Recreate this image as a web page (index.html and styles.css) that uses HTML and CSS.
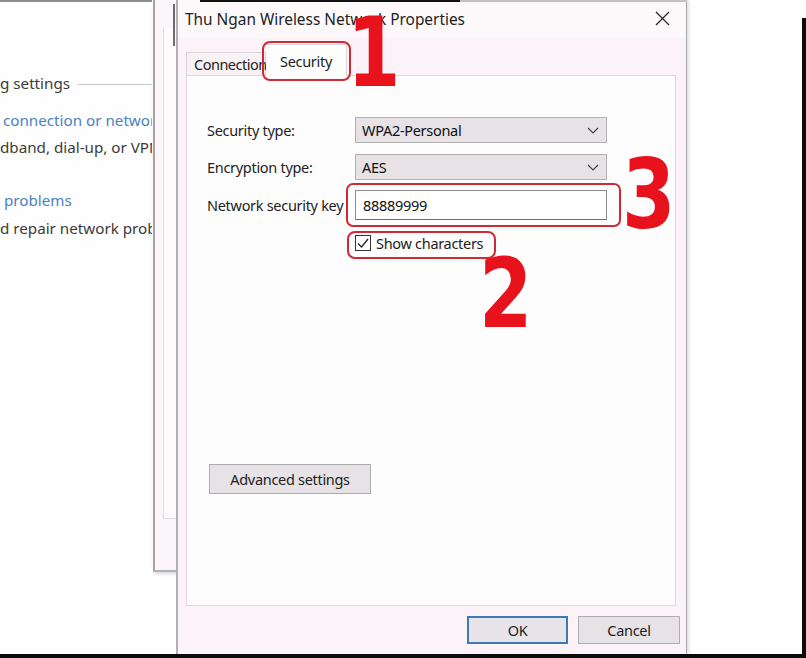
FILE: index.html
```html
<!DOCTYPE html>
<html>
<head>
<meta charset="utf-8">
<link rel="stylesheet" href="styles.css">
</head>
<body>
<div class="desk">
  <div class="bgwin">
    <div class="bg-head"><span>g settings</span><span class="rule"></span></div>
    <div class="bg-link first">connection or network</div>
    <div class="bg-text">dband, dial-up, or VPN</div>
    <div class="bg-link second">problems</div>
    <div class="bg-text">d repair network problems</div>
  </div>

  <div class="midwin"><div class="midwin-inner"></div><div class="midwin-mark"></div></div>

  <div class="dialog">
    <div class="titlebar">
      <span class="title">Thu Ngan Wireless Network Properties</span>
      <svg class="close" width="15" height="15" viewBox="0 0 15 15"><path d="M1 1 L14 14 M14 1 L1 14" stroke="#2a2a2a" stroke-width="1.3" fill="none"/></svg>
    </div>
    <div class="tabs">
      <div class="tab">Connection</div>
      <div class="tab active">Security</div>
    </div>
    <div class="panel">
      <div class="form">
        <label class="lbl">Security type:</label>
        <div class="select"><span>WPA2-Personal</span><svg width="12" height="7" viewBox="0 0 12 7"><path d="M1 1 L6 6 L11 1" stroke="#444" stroke-width="1.2" fill="none"/></svg></div>
        <label class="lbl">Encryption type:</label>
        <div class="select"><span>AES</span><svg width="12" height="7" viewBox="0 0 12 7"><path d="M1 1 L6 6 L11 1" stroke="#444" stroke-width="1.2" fill="none"/></svg></div>
        <label class="lbl">Network security key</label>
        <div class="input">88889999</div>
        <span></span>
        <div class="check"><span class="box"><svg width="14" height="14" viewBox="0 0 14 14"><path d="M2 7.5 L5.5 11 L12 3" stroke="#222" stroke-width="1.3" fill="none"/></svg></span><span>Show characters</span></div>
      </div>
      <button class="btn adv">Advanced settings</button>
    </div>
    <div class="actions">
      <button class="btn ok">OK</button>
      <button class="btn cancel">Cancel</button>
    </div>
  </div>

  <div class="mark m-tab"></div>
  <div class="mark m-key"></div>
  <div class="mark m-check"></div>
  <div class="num n1">1</div>
  <div class="num n2">2</div>
  <div class="num n3">3</div>
</div>
</body>
</html>
```
FILE: styles.css
```css
html, body {
  margin: 0;
  padding: 0;
}
body {
  width: 806px;
  height: 658px;
  overflow: hidden;
  background: #ffffff;
  font-family: "Noto Sans", "Open Sans", sans-serif;
}
.desk {
  position: relative;
  width: 806px;
  height: 658px;
  overflow: hidden;
  background: #fefefe;
}
.desk::before {
  content: "";
  position: absolute;
  left: 0;
  right: 0;
  top: 654px;
  height: 4px;
  background: #0c0c0c;
  z-index: 5;
}
.desk::after {
  content: "";
  position: absolute;
  left: 802px;
  top: 18px;
  width: 4px;
  height: 640px;
  background: #0c0c0c;
  z-index: 5;
}

/* background window (left) */
.bgwin {
  position: absolute;
  left: 0;
  top: 0;
  width: 152px;
  height: 654px;
  overflow: hidden;
  border-top: 2px solid #8f8f8f;
  box-sizing: border-box;
  padding-top: 70px;
  font-size: 15.2px;
  line-height: 22px;
  color: #3b3b3b;
  white-space: nowrap;
  background: #fefefe;
}
.bg-head {
  display: flex;
  align-items: center;
}
.bg-head .rule {
  flex: 1;
  height: 1px;
  background: #c9c9c9;
  margin-left: 8px;
  margin-top: 3px;
}
.bg-link {
  color: #4a82c3;
  padding-left: 3px;
}
.bg-link.first { margin-top: 15px; }
.bg-link.second { margin-top: 31px; padding-left: 4px; }
.bg-text { margin-top: 5px; }
.bg-link.second + .bg-text { margin-top: 6px; }

/* middle window strip */
.midwin {
  position: absolute;
  left: 153px;
  top: 0;
  width: 40px;
  height: 570px;
  background: #fbf6f9;
  border-left: 2px solid #a6a3a5;
  border-bottom: 2px solid #b4b1b3;
  box-shadow: 1px 2px 3px rgba(0,0,0,0.15);
}
.midwin-inner {
  margin-left: 8px;
  margin-top: 28px;
  height: 490px;
  border-left: 1px solid #dedadd;
  border-bottom: 1px solid #dedadd;
  background: #fdfbfc;
}
.midwin-mark {
  position: absolute;
  left: 18px;
  top: 4px;
  width: 2px;
  height: 42px;
  background: #6d6d6d;
}

/* dialog */
.dialog {
  position: absolute;
  left: 176px;
  top: 0;
  width: 511px;
  height: 654px;
  box-sizing: border-box;
  background: #fbf3f7;
  border-left: 2px solid #b3b0b2;
  border-right: 1px solid #a8a8a8;
  box-shadow: 2px 0 3px rgba(0,0,0,0.12);
  display: flex;
  flex-direction: column;
  color: #1f1f1f;
  font-size: 14.5px;
  letter-spacing: -0.3px;
}
.dialog::before {
  content: "";
  position: absolute;
  top: 0;
  left: -2px;
  right: -1px;
  height: 2px;
  background: linear-gradient(to right, transparent 0, transparent 24px, #111 24px, #111 284px, #c2c2c2 284px);
}
.titlebar {
  height: 38px;
  flex: none;
  display: flex;
  align-items: center;
  justify-content: space-between;
  padding: 0 16px 0 7px;
  background: #fdf9fb;
}
.title {
  font-size: 15.4px;
  letter-spacing: 0;
  color: #222;
}
.close { margin-top: -2px; }
.tabs {
  height: 37px;
  flex: none;
  display: flex;
  align-items: flex-end;
  padding-left: 8px;
  position: relative;
  z-index: 2;
}
.tab {
  width: 80px;
  height: 23px;
  box-sizing: border-box;
  padding: 0 0 0 7px;
  border: 1px solid #d8d6d7;
  border-bottom: none;
  line-height: 22px;
  letter-spacing: -0.5px;
  background: #f8f2f5;
  color: #222;
  white-space: nowrap;
}
.tab.active {
  width: 81px;
  height: 32px;
  margin-bottom: -1px;
  padding: 5px 0 0 0;
  text-align: center;
  letter-spacing: -0.3px;
  background: #fefdfe;
  border-left: none;
}
.panel {
  height: 531px;
  flex: none;
  box-sizing: border-box;
  margin: 0 10px 0 8px;
  background: #fefdfe;
  border: 1px solid #dcdadb;
  padding: 41px 0 0 20px;
  position: relative;
  z-index: 1;
}
.form {
  display: grid;
  grid-template-columns: 148px 252px;
  grid-template-rows: 26px 26px 30px 17px;
  row-gap: 11px;
  align-items: center;
}
.form > :nth-child(5), .form > :nth-child(6) { margin-top: -2px; }
.form > :nth-child(7), .form > :nth-child(8) { margin-top: 5px; }
.lbl {
  color: #222;
  white-space: nowrap;
}
.select {
  height: 26px;
  box-sizing: border-box;
  background: #e6e2e5;
  border: 1px solid #b3b0b2;
  display: flex;
  align-items: center;
  justify-content: space-between;
  padding: 0 7px 0 6px;
  color: #111;
}
.input {
  height: 30px;
  box-sizing: border-box;
  background: #ffffff;
  border: 1px solid #8e8c8d;
  border-bottom-color: #6e6e6e;
  padding: 0 7px;
  line-height: 28px;
  color: #111;
}
.check {
  display: flex;
  align-items: center;
  gap: 5px;
  color: #222;
}
.box {
  width: 16px;
  height: 16px;
  box-sizing: border-box;
  border: 1px solid #333;
  background: #fff;
  display: flex;
  align-items: center;
  justify-content: center;
}
.btn {
  font-family: inherit;
  font-size: 14.5px;
  letter-spacing: -0.3px;
  color: #222;
  background: #e6e2e5;
  border: 1px solid #adadad;
  padding: 0;
  margin: 0;
}
.adv {
  display: block;
  margin: 215px 0 0 2px;
  width: 162px;
  height: 30px;
}
.actions {
  display: flex;
  justify-content: flex-end;
  gap: 10px;
  padding: 10px 6px 0 0;
}
.ok {
  width: 101px;
  height: 28px;
  border: 2px solid #3d7ab3;
  background: #e6e4e9;
}
.cancel {
  width: 102px;
  height: 28px;
}

/* annotations */
.mark {
  position: absolute;
  border: 2px solid #cf2a35;
  border-radius: 8px;
  box-sizing: border-box;
  z-index: 4;
}
.m-tab { left: 262px; top: 41px; width: 89px; height: 40px; }
.m-key { left: 346px; top: 183px; width: 275px; height: 44px; border-radius: 7px; }
.m-check { left: 347px; top: 231px; width: 149px; height: 28px; border-radius: 8px; }
.num {
  position: absolute;
  font-family: "DejaVu Sans", sans-serif;
  font-weight: bold;
  color: #e8121c;
  font-size: 96px;
  line-height: 1;
  z-index: 4;
  transform-origin: 0 0;
  transform: scaleX(0.8);
}
.n1 { left: 347px; top: 5px; }
.n2 { left: 479px; top: 246px; }
.n3 { left: 622px; top: 147px; }
```
